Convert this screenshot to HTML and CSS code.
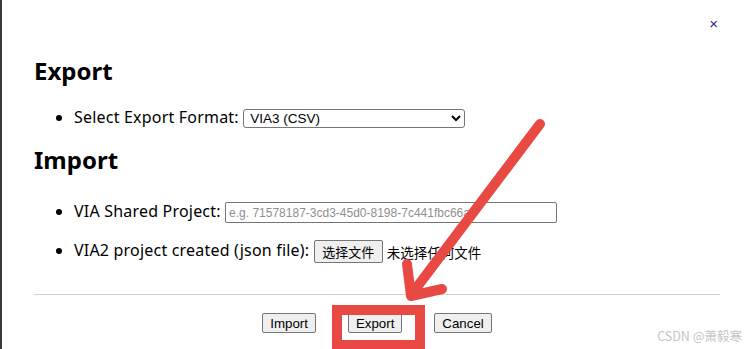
FILE: index.html
```html
<!DOCTYPE html>
<html lang="en">
<head>
  <meta charset="UTF-8">
  <meta name="viewport" content="width=device-width, initial-scale=1.0">
  <title>Export / Import</title>
  <link rel="stylesheet" href="styles.css">
</head>
<body>
  <div class="dialog">
    <div class="close-row"><span class="close">&times;</span></div>

    <h2>Export</h2>
    <ul class="export-list">
      <li>Select Export Format:
        <select class="format">
          <option>VIA3 (CSV)</option>
        </select>
      </li>
    </ul>

    <h2>Import</h2>
    <ul class="import-list">
      <li>VIA Shared Project:
        <input class="project-id" type="text" placeholder="e.g. 71578187-3cd3-45d0-8198-7c441fbc66af">
      </li>
      <li>VIA2 project created (json file):
        <button class="file-btn">选择文件</button><span class="file-name">未选择任何文件</span>
      </li>
    </ul>

    <hr>

    <div class="actions">
      <button class="btn">Import</button>
      <button class="btn">Export</button>
      <button class="btn">Cancel</button>
    </div>
  </div>

  <!-- annotation drawn over the screenshot -->
  <svg class="markup" width="750" height="349" viewBox="0 0 750 349">
    <line x1="540" y1="124" x2="414" y2="291" />
    <polyline points="407,264 411,296 442,289" />
    <rect x="337" y="310" width="83" height="35" />
  </svg>
  <div class="watermark">CSDN @萧毅寒</div>
</body>
</html>
```

FILE: styles.css
```css
body {
  margin: 0;
  font-family: "Noto Sans", sans-serif;
  color: #000;
  background: #fff;
}
.dialog {
  height: 349px;
  box-sizing: border-box;
  border-left: 2px solid #3a3a3a;
  padding: 0 30px 0 32px;
  display: flex;
  flex-direction: column;
}
.close-row {
  display: flex;
  justify-content: flex-end;
  height: 24px;
  padding-top: 12px;
}
.close {
  font-family: "Liberation Sans", Arial, sans-serif;
  font-size: 15px;
  line-height: 24px;
  color: #2a2a8c;
  margin-right: 2px;
}
h2 {
  font-size: 24px;
  font-weight: bold;
  line-height: 30px;
  margin: 20px 0 0;
}
ul {
  margin: 0;
  padding-left: 40px;
  font-size: 16px;
  letter-spacing: 0.2px;
}
li {
  line-height: 24px;
  height: 24px;
}
.export-list {
  margin-top: 19px;
  margin-bottom: 16px;
}
.export-list + h2 {
  margin-top: 0;
}
.import-list {
  margin-top: 24px;
}
.import-list li + li {
  margin-top: 15px;
}
.format {
  width: 222px;
  height: 19px;
  font-family: "Liberation Sans", Arial, sans-serif;
  font-size: 13.5px;
  background: #fff;
  border: 1px solid #767676;
  border-radius: 3px;
  vertical-align: middle;
  padding: 0 0 0 2px;
}
.project-id {
  width: 332px;
  height: 21px;
  box-sizing: border-box;
  font-family: "Liberation Sans", Arial, sans-serif;
  font-size: 12px;
  border: 1px solid #767676;
  border-radius: 2px;
  padding: 1px 3px;
  vertical-align: middle;
}
.project-id::placeholder {
  color: #8f8f8f;
}
.file-btn {
  width: 69px;
  height: 23px;
  font-family: "Noto Sans CJK SC", sans-serif;
  font-size: 13px;
  background: #efefef;
  border: 1px solid #767676;
  border-radius: 2px;
  padding: 0;
  vertical-align: middle;
}
.file-name {
  font-family: "Noto Sans CJK SC", sans-serif;
  font-size: 13.5px;
  letter-spacing: 0;
  margin-left: 4px;
  vertical-align: middle;
}
hr {
  border: none;
  border-top: 1px solid #d0d0d0;
  margin: 32px 0 0;
}
.actions {
  display: flex;
  justify-content: center;
  gap: 32px;
  margin-top: 18px;
}
.btn {
  height: 20px;
  font-family: "Liberation Sans", Arial, sans-serif;
  font-size: 13.3px;
  background: #efefef;
  border: 1px solid #767676;
  border-radius: 2px;
  padding: 0 7px;
}
.markup {
  position: absolute;
  left: 0;
  top: 0;
  pointer-events: none;
}
.markup line,
.markup polyline {
  fill: none;
  stroke: #e84a43;
  stroke-width: 10;
  stroke-linecap: round;
  stroke-linejoin: round;
}
.markup rect {
  fill: none;
  stroke: #e84a43;
  stroke-width: 10;
}
.watermark {
  position: absolute;
  right: 8px;
  top: 326px;
  font-family: "Noto Sans CJK SC", sans-serif;
  font-size: 12.5px;
  color: #c4c4c4;
}
```
